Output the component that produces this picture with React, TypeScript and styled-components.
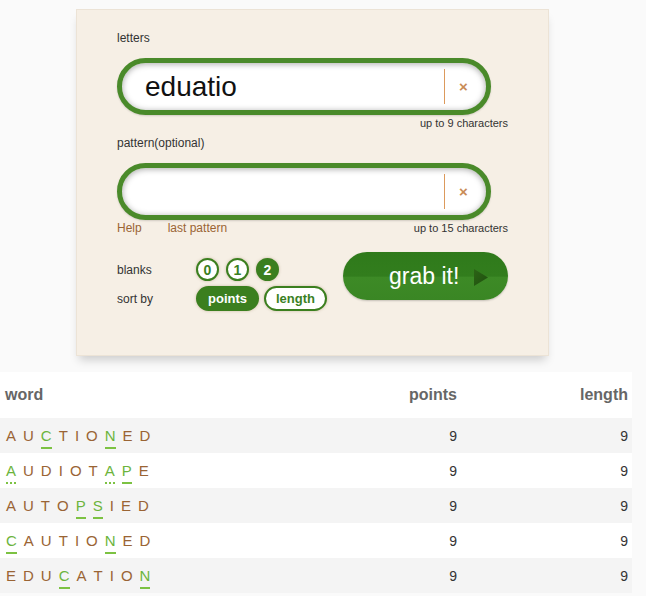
import React from 'react'
import styled, { createGlobalStyle } from 'styled-components'

const GlobalStyle = createGlobalStyle`
  body {
    margin: 0;
    background: #fafafa;
    font-family: 'Liberation Sans', Arial, sans-serif;
    color: #333;
  }
`

interface Letter {
  ch: string
  mark?: 'blank' | 'dotted'
}

interface Result {
  word: Letter[]
  points: number
  length: number
}

const parse = (s: string): Letter[] => {
  // lowercase = blank (solid), * before a letter = dotted
  const out: Letter[] = []
  for (let i = 0; i < s.length; i++) {
    const c = s[i]
    if (c === '*') {
      out.push({ ch: s[i + 1].toUpperCase(), mark: 'dotted' })
      i++
    } else if (c === c.toLowerCase()) {
      out.push({ ch: c.toUpperCase(), mark: 'blank' })
    } else {
      out.push({ ch: c })
    }
  }
  return out
}

const results: Result[] = [
  { word: parse('AUcTIOnED'), points: 9, length: 9 },
  { word: parse('*AUDIOT*ApE'), points: 9, length: 9 },
  { word: parse('AUTOpsIED'), points: 9, length: 9 },
  { word: parse('cAUTIOnED'), points: 9, length: 9 },
  { word: parse('EDUcATIOn'), points: 9, length: 9 },
]

const App: React.FC = () => {
  return (
    <>
      <GlobalStyle />
      <Panel>
        <Label>letters</Label>
        <InputShell>
          <InputText>eduatio</InputText>
          <Clear>×</Clear>
        </InputShell>
        <Hint>up to 9 characters</Hint>
        <Label $gap={5}>pattern(optional)</Label>
        <InputShell>
          <InputText />
          <Clear>×</Clear>
        </InputShell>
        <LinkRow>
          <TextLink>Help</TextLink>
          <TextLink>last pattern</TextLink>
          <HintInline>up to 15 characters</HintInline>
        </LinkRow>
        <Controls>
          <OptionGrid>
            <OptionLabel>blanks</OptionLabel>
            <Options>
              <Bubble>0</Bubble>
              <Bubble>1</Bubble>
              <Bubble $active>2</Bubble>
            </Options>
            <OptionLabel>sort by</OptionLabel>
            <Options $gap={5}>
              <Pill $active>points</Pill>
              <Pill>length</Pill>
            </Options>
          </OptionGrid>
          <GrabButton>
            grab it!
            <svg width="14" height="17" viewBox="0 0 14 17">
              <defs>
                <linearGradient id="tri" x1="0" y1="0" x2="1" y2="1">
                  <stop offset="0" stopColor="#2c6416" />
                  <stop offset="1" stopColor="#1f4f0e" />
                </linearGradient>
              </defs>
              <polygon points="0,0 14,8.5 0,17" fill="url(#tri)" />
            </svg>
          </GrabButton>
        </Controls>
      </Panel>
      <Table>
        <thead>
          <tr>
            <HeadCell>word</HeadCell>
            <HeadCell $right>points</HeadCell>
            <HeadCell $right>length</HeadCell>
          </tr>
        </thead>
        <tbody>
          {results.map((r, i) => (
            <Row key={i} $odd={i % 2 === 0}>
              <WordCell>
                {r.word.map((l, j) => (
                  <Char key={j} $mark={l.mark}>
                    {l.ch}
                  </Char>
                ))}
              </WordCell>
              <NumCell>{r.points}</NumCell>
              <NumCell>{r.length}</NumCell>
            </Row>
          ))}
        </tbody>
      </Table>
    </>
  )
}

const Panel = styled.div`
  box-sizing: border-box;
  width: 473px;
  height: 347px;
  margin: 9px 0 0 76px;
  padding: 21px 40px 0 40px;
  background: #f6efe5;
  border: 1px solid #ece3d6;
  box-shadow: 0 7px 9px -3px rgba(0, 0, 0, 0.18);
`

const Label = styled.div<{ $gap?: number }>`
  font-size: 12px;
  line-height: 15px;
  color: #333;
  margin-top: ${(p) => p.$gap || 0}px;
`

const InputShell = styled.div`
  box-sizing: border-box;
  width: 374px;
  height: 57px;
  margin-top: 12px;
  border: 5px solid #4a8a2a;
  border-radius: 29px;
  background: #fff;
  display: flex;
  align-items: stretch;
  box-shadow: inset 0 1px 6px rgba(0, 0, 0, 0.35), 0 1px 2px rgba(0, 0, 0, 0.15);
`

const InputText = styled.div`
  flex: 1;
  display: flex;
  align-items: center;
  padding-left: 23px;
  font-size: 28px;
  color: #111;
  border-right: 1px solid #dc9a5c;
  margin: 6px 0;
`

const Clear = styled.div`
  width: 37px;
  display: flex;
  align-items: center;
  justify-content: center;
  padding-right: 4px;
  color: #c98c55;
  font-size: 15px;
  font-weight: bold;
`

const Hint = styled.div`
  font-size: 11px;
  line-height: 15px;
  color: #333;
  text-align: right;
  margin-top: 1px;
`

const LinkRow = styled.div`
  display: flex;
  align-items: center;
  gap: 26px;
  margin-top: 1px;
  font-size: 11px;
  line-height: 15px;
`

const TextLink = styled.span`
  color: #9a6434;
  font-size: 12px;
`

const HintInline = styled.span`
  margin-left: auto;
  color: #333;
`

const Controls = styled.div`
  display: flex;
  align-items: flex-start;
  margin-top: 16px;
`

const OptionGrid = styled.div`
  display: grid;
  grid-template-columns: 79px auto;
  row-gap: 5px;
  align-items: center;
  padding-top: 6px;
`

const OptionLabel = styled.span`
  font-size: 12px;
  color: #333;
`

const Options = styled.div<{ $gap?: number }>`
  display: flex;
  gap: ${(p) => p.$gap ?? 7}px;
`

const Bubble = styled.span<{ $active?: boolean }>`
  box-sizing: border-box;
  width: 23px;
  height: 23px;
  border-radius: 50%;
  border: 2px solid #3b7f1f;
  background: ${(p) => (p.$active ? '#3b7f1f' : '#fff')};
  color: ${(p) => (p.$active ? '#fff' : '#3b7f1f')};
  font-size: 14px;
  font-weight: bold;
  display: flex;
  align-items: center;
  justify-content: center;
  box-shadow: 0 0 3px rgba(120, 90, 40, 0.35);
`

const Pill = styled.span<{ $active?: boolean }>`
  box-sizing: border-box;
  height: 25px;
  padding: 0 10px;
  border-radius: 13px;
  border: 2px solid #3b7f1f;
  background: ${(p) => (p.$active ? '#3b7f1f' : '#fff')};
  color: ${(p) => (p.$active ? '#fff' : '#3b7f1f')};
  font-size: 13px;
  font-weight: bold;
  display: flex;
  align-items: center;
  box-shadow: 0 0 3px rgba(120, 90, 40, 0.35);
`

const GrabButton = styled.div`
  box-sizing: border-box;
  margin-left: auto;
  width: 165px;
  height: 48px;
  border-radius: 24px;
  padding-left: 46px;
  display: flex;
  align-items: center;
  gap: 15px;
  color: #fff;
  font-size: 23px;
  background: linear-gradient(
    to bottom,
    #2f7a1b 0%,
    #327d1d 50%,
    #3d8a26 53%,
    #3a8624 100%
  );
  box-shadow: 0 1px 2px rgba(0, 0, 0, 0.2);

  svg {
    margin-top: 2px;
  }
`

const Table = styled.table`
  width: 632px;
  margin-top: 16px;
  border-collapse: collapse;
  background: #fff;
  font-size: 14px;
`

const HeadCell = styled.th<{ $right?: boolean }>`
  height: 46px;
  padding: 0 4px 0 5px;
  font-size: 16px;
  font-weight: bold;
  color: #666;
  text-align: ${(p) => (p.$right ? 'right' : 'left')};

  &:nth-child(2) {
    width: 120px;
  }
  &:nth-child(3) {
    width: 162px;
  }
`

const Row = styled.tr<{ $odd: boolean }>`
  height: 35px;
  background: ${(p) => (p.$odd ? '#f4f4f4' : '#fff')};
`

const WordCell = styled.td`
  padding: 5px 0 0 6px;
  white-space: nowrap;
`

const Char = styled.span<{ $mark?: 'blank' | 'dotted' }>`
  display: inline-block;
  margin-right: 7px;
  padding-bottom: 3px;
  font-size: 15px;
  line-height: 16px;
  color: ${(p) => (p.$mark ? '#6cb43c' : '#9a6434')};
  border-bottom: 2px
    ${(p) => (p.$mark === 'dotted' ? 'dotted' : 'solid')}
    ${(p) => (p.$mark ? '#7cc242' : 'transparent')};
`

const NumCell = styled.td`
  padding: 0 4px;
  text-align: right;
  color: #333;
`

export default App
